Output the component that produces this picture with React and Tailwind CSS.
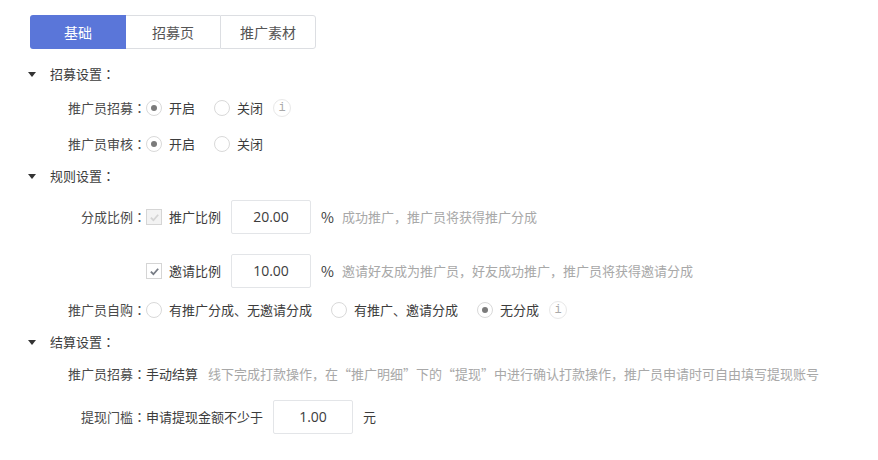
const Radio = ({ checked, label }) => (
  <label className="flex items-center h-4">
    <span className="w-4 h-4 rounded-full border border-[#d9d9d9] bg-white flex items-center justify-center shrink-0">
      {checked && <span className="w-[6px] h-[6px] rounded-full bg-[#7b7b7b]"></span>}
    </span>
    <span className="ml-[7px] text-[#3c3c3c]">{label}</span>
  </label>
);

const Check = ({ disabled, label }) => (
  <label className="flex items-center">
    <span className={`w-4 h-4 border border-[#d5d5d5] flex items-center justify-center shrink-0 ${disabled ? "bg-[#f3f3f3]" : "bg-white"}`}>
      <svg viewBox="0 0 12 12" className="w-[11px] h-[11px]" fill="none" stroke={disabled ? "#d4d4d4" : "#777c85"} strokeWidth="2">
        <path d="M2 6.2 4.8 9 10 3" />
      </svg>
    </span>
    <span className="ml-[7px] text-[#3c3c3c]">{label}</span>
  </label>
);

const InfoIcon = () => (
  <span className="w-[18px] h-[18px] rounded-full border border-[#e8e8e8] flex items-center justify-center text-[12px] text-[#aaa] font-['Liberation_Mono',monospace]">
    i
  </span>
);

const NumInput = ({ value }) => (
  <div className="w-20 h-[34px] border border-[#e3e5e8] rounded-[2px] flex items-center justify-center text-[14px] text-[#3c3c3c] font-['Open_Sans',sans-serif] shrink-0">
    {value}
  </div>
);

// the colon sits centred in the reference, the TC face draws it that way
const Colon = () => <span className="font-['Noto_Sans_CJK_TC',sans-serif]">：</span>;

const SectionTitle = ({ children }) => (
  <div className="flex items-center h-5">
    <span className="w-0 h-0 ml-[-2px] border-x-[4px] border-x-transparent border-t-[5px] border-t-[#333] shrink-0"></span>
    <span className="ml-[14px] text-[#3c3c3c]">{children}<Colon /></span>
  </div>
);

const Label = ({ children }) => (
  <span className="w-[86px] ml-[30px] text-right text-[#4a4a4a] shrink-0 whitespace-nowrap">{children}<Colon /></span>
);

const Hint = ({ children }) => <span className="text-[#a8a8a8] whitespace-nowrap">{children}</span>;

const App = () => {
  return (
    <div className="w-[878px] h-[460px] bg-white overflow-hidden pt-[15px] pl-[30px] text-[13px] leading-5 font-['Noto_Sans_CJK_SC','Liberation_Sans',sans-serif]">
      {/* tabs */}
      <div className="flex w-[286px] h-[34px] text-[14px] text-[#555]">
        <div className="w-24 rounded-l-[3px] bg-[#5a76d9] text-white flex items-center justify-center">基础</div>
        <div className="w-[94px] border-y border-[#dcdee2] flex items-center justify-center">招募页</div>
        <div className="w-24 border border-[#dcdee2] rounded-r-[3px] flex items-center justify-center">推广素材</div>
      </div>

      {/* 招募设置 */}
      <div className="mt-[15px]">
        <SectionTitle>招募设置</SectionTitle>
        <div className="flex items-center mt-[14px] h-5">
          <Label>推广员招募</Label>
          <div className="flex items-center gap-[19px]">
            <Radio checked label="开启" />
            <Radio label="关闭" />
          </div>
          <span className="ml-[10px]"><InfoIcon /></span>
        </div>
        <div className="flex items-center mt-4 h-5">
          <Label>推广员审核</Label>
          <div className="flex items-center gap-[19px]">
            <Radio checked label="开启" />
            <Radio label="关闭" />
          </div>
        </div>
      </div>

      {/* 规则设置 */}
      <div className="mt-[12px]">
        <SectionTitle>规则设置</SectionTitle>
        <div className="flex items-center mt-[14px] h-[34px]">
          <Label>分成比例</Label>
          <Check disabled label="推广比例" />
          <span className="ml-[10px]"><NumInput value="20.00" /></span>
          <span className="ml-[10px] text-[#3c3c3c] text-[14px]">%</span>
          <span className="ml-[8px]"><Hint>成功推广，推广员将获得推广分成</Hint></span>
        </div>
        <div className="flex items-center mt-5 h-[34px]">
          <span className="w-[116px] shrink-0"></span>
          <Check label="邀请比例" />
          <span className="ml-[10px]"><NumInput value="10.00" /></span>
          <span className="ml-[10px] text-[#3c3c3c] text-[14px]">%</span>
          <span className="ml-[8px]"><Hint>邀请好友成为推广员，好友成功推广，推广员将获得邀请分成</Hint></span>
        </div>
        <div className="flex items-center mt-[12px] h-5">
          <Label>推广员自购</Label>
          <div className="flex items-center gap-[19px]">
            <Radio label="有推广分成、无邀请分成" />
            <Radio label="有推广、邀请分成" />
            <Radio checked label="无分成" />
          </div>
          <span className="ml-[10px]"><InfoIcon /></span>
        </div>
      </div>

      {/* 结算设置 */}
      <div className="mt-[12px]">
        <SectionTitle>结算设置</SectionTitle>
        <div className="flex items-center mt-[12px] h-5">
          <Label>推广员招募</Label>
          <span className="text-[#3c3c3c]">手动结算</span>
          <span className="ml-[10px]"><Hint>线下完成打款操作，在“推广明细”下的“提现”中进行确认打款操作，推广员申请时可自由填写提现账号</Hint></span>
        </div>
        <div className="flex items-center mt-[16px] h-[34px]">
          <Label>提现门槛</Label>
          <span className="text-[#3c3c3c]">申请提现金额不少于</span>
          <span className="ml-[10px]"><NumInput value="1.00" /></span>
          <span className="ml-[10px] text-[#3c3c3c]">元</span>
        </div>
      </div>
    </div>
  );
};

export default App;
